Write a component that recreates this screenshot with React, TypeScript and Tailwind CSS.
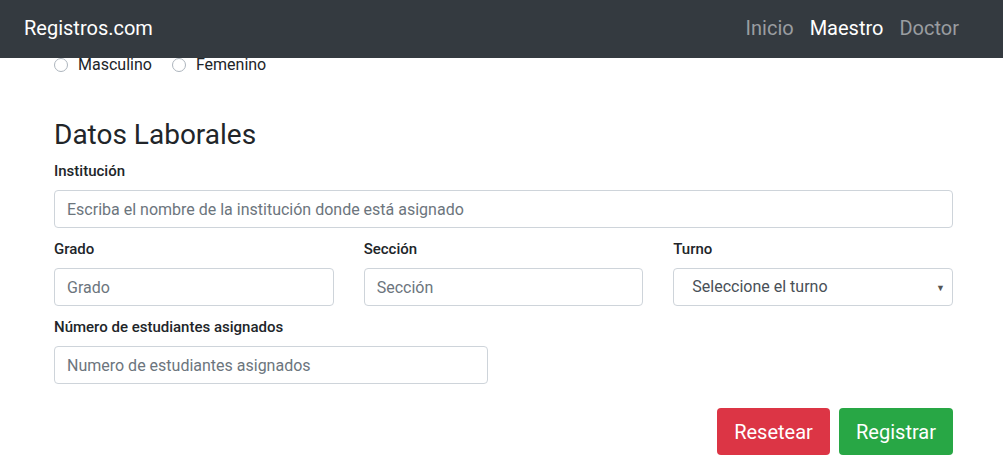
import React from "react";

const inputCls =
  "block w-full h-[38px] rounded-[4px] border border-[#ced4da] bg-white px-[12px] text-[16px] text-[#495057] placeholder:text-[#6c757d] outline-none";

export default function App() {
  return (
    <div className="min-h-[463px] bg-white text-[#212529]" style={{ fontFamily: "Roboto, 'Liberation Sans', sans-serif" }}>
      <nav className="h-[58px] bg-[#343a40] flex items-center justify-between pl-[24px] pr-[44px] relative z-10 pb-[2px]">
        <span className="text-[20px] text-white">Registros.com</span>
        <div className="flex items-center gap-[16px] text-[20px]">
          <span className="text-[#9a9da0]">Inicio</span>
          <span className="text-white">Maestro</span>
          <span className="text-[#9a9da0]">Doctor</span>
        </div>
      </nav>
      <div className="pl-[54px]">
        <div className="w-[899px]">
          <div className="flex items-center h-[14px] text-[16px] gap-[20px]">
            <label className="flex items-center gap-[10px]">
              <span className="w-[14px] h-[14px] rounded-full border border-[#adb5bd] bg-white" />
              <span>Masculino</span>
            </label>
            <label className="flex items-center gap-[10px]">
              <span className="w-[14px] h-[14px] rounded-full border border-[#adb5bd] bg-white" />
              <span>Femenino</span>
            </label>
          </div>
          <h3 className="text-[28px] leading-[34px] mt-[46px] mb-[8px]">Datos Laborales</h3>
          <div className="text-[15px] font-medium leading-[22px] mb-[8px]">Institución</div>
          <input className={inputCls} placeholder="Escriba el nombre de la institución donde está asignado" />
          <div className="grid grid-cols-3 gap-x-[30px] mt-[10px]">
            <div>
              <div className="text-[15px] font-medium leading-[22px] mb-[8px]">Grado</div>
              <input className={inputCls} placeholder="Grado" />
            </div>
            <div>
              <div className="text-[15px] font-medium leading-[22px] mb-[8px]">Sección</div>
              <input className={inputCls} placeholder="Sección" />
            </div>
            <div>
              <div className="text-[15px] font-medium leading-[22px] mb-[8px]">Turno</div>
              <div className="relative h-[38px] rounded-[4px] border border-[#ced4da] bg-white flex items-center pl-[18px] text-[16px] text-[#495057]">
                Seleccione el turno
                <span className="absolute right-[7px] top-[13px] text-[9px] text-[#555]">▼</span>
              </div>
            </div>
          </div>
          <div className="mt-[10px] w-[434px]">
            <div className="text-[15px] font-medium leading-[22px] mb-[8px]">Número de estudiantes asignados</div>
            <input className={inputCls} placeholder="Numero de estudiantes asignados" />
          </div>
          <div className="flex justify-end gap-[9px] mt-[24px]">
            <button className="h-[47px] w-[113px] rounded-[4px] bg-[#dc3545] text-white text-[20px]">Resetear</button>
            <button className="h-[47px] w-[114px] rounded-[4px] bg-[#28a745] text-white text-[20px]">Registrar</button>
          </div>
        </div>
      </div>
    </div>
  );
}
